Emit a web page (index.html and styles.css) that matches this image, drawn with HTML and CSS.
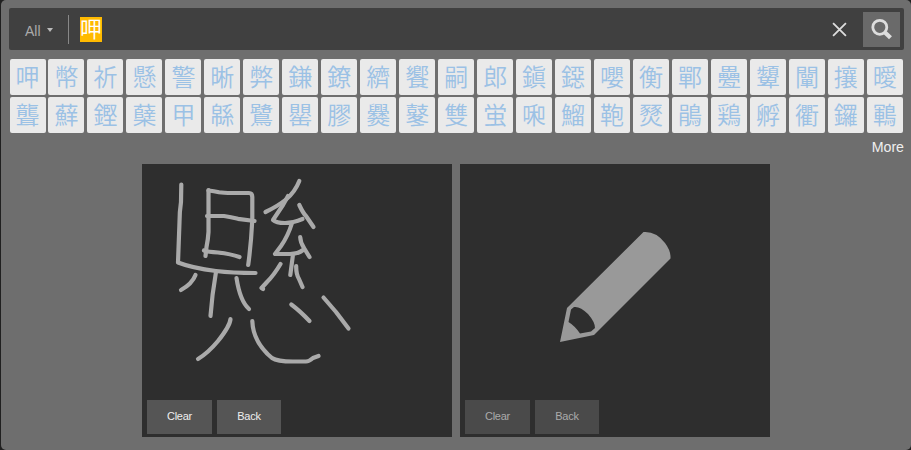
FILE: index.html
```
<!DOCTYPE html>
<html lang="ja">
<head>
<meta charset="utf-8">
<title>Handwriting search</title>
<link rel="stylesheet" href="styles.css">
</head>
<body>
<main class="app">
  <form class="search">
    <div class="filter">All<span class="caret"></span></div>
    <div class="query"><span class="selected">呷</span></div>
    <svg class="close" viewBox="0 0 14 14"><path d="M1 1L13 13M13 1L1 13"/></svg>
    <div class="submit"><svg viewBox="0 0 22 22"><circle cx="8.8" cy="9.300" r="7"/><path d="M14 14.500L19.5 19.8"/></svg></div>
  </form>
  <div class="results">
    <b>呷</b><b>幣</b><b>祈</b><b>懸</b><b>警</b><b>晰</b><b>弊</b><b>鎌</b><b>鐐</b><b>纃</b><b>饗</b><b>嗣</b><b>郎</b><b>鎭</b><b>鐚</b><b>嚶</b><b>衡</b><b>鄲</b><b>疉</b><b>顰</b><b>闡</b><b>攘</b><b>曖</b>
    <b>聾</b><b>蘚</b><b>鏗</b><b>蘖</b><b>甲</b><b>緜</b><b>鷺</b><b>罌</b><b>膠</b><b>爨</b><b>鼕</b><b>雙</b><b>蛍</b><b>啝</b><b>鰡</b><b>鞄</b><b>燹</b><b>鵑</b><b>鶏</b><b>孵</b><b>衢</b><b>鑼</b><b>鶤</b>
  </div>
  <div class="more">More</div>
  <div class="boards">
    <section class="board">
      <svg class="ink" viewBox="142 164 310 231">
        <path d="M181.300 184.500L181 202Q179.500 212 179.500 222L178 262.500Q192 268 216 271Q232 273 255.500 273"/>
        <path d="M208.500 190L208.500 232Q208 240 206.500 247L205.500 256"/>
        <path d="M208.500 190.500Q214 191 219 192.300Q223 193 232 193H249Q252.300 193 252.300 197V220Q251 245 248.200 265"/>
        <path d="M207 216H224Q231 217 238 218.800L254.500 221M204 250.500Q208 252 218 252.500Q231 254 239.500 257"/>
        <path d="M195.500 275Q192 284 181 290M216 272Q212 295 210.500 316M236.500 278Q240 301 249 309"/>
        <path d="M299.300 181Q295 192 286 199.500Q278 206 265.500 212"/>
        <path d="M288 196L283 205L273 220Q276 223 285 223Q293 223 302.500 219"/>
        <path d="M299.300 205Q303 213 306 216L313.500 227"/>
        <path d="M292 223Q288 236 281 246L275 254H290Q298 254 303 250"/>
        <path d="M300.200 237Q300.500 243 304 248L309.500 257M280.500 264Q274 275 267 282L261.500 288L263 289M292.800 256L290.300 275M296.200 266Q296 274 299 279L302.500 287"/>
        <path d="M230.500 319Q230 326 218 341Q208 353 198 359"/>
        <path d="M252.300 321Q253 342 272 358Q277 361.500 293 361.500H306Q309 361.500 313 358L318.500 356"/>
        <path d="M291.300 304.500Q300 311 309.500 321M323.500 297.500L336 312L348.500 328.500"/>
      </svg>
      <div class="actions"><button class="clear">Clear</button><button>Back</button></div>
    </section>
    <section class="board idle">
      <svg class="ink" viewBox="460 164 310 231">
        <path class="pencil" fill-rule="evenodd" d="M560 342L567 308L643.500 232Q656 231 665 243Q671 251 670.500 258.500L594 335ZM571 309.500L568.500 322Q575 326 580 333.500L591 331.500L595 328Q595 322 588 314Q580 306 574 307Z"/>
      </svg>
      <div class="actions"><button class="clear">Clear</button><button>Back</button></div>
    </section>
  </div>
</main>
</body>
</html>
```
FILE: styles.css
```
* { box-sizing: border-box; }
body { margin: 0; background: #202020; font-family: "Liberation Sans", "Noto Sans CJK JP", sans-serif; }
.app { height: 450px; margin-left: 1px; padding: 8px 7px 0 8px; background: #6e6e6e; border-radius: 5px; }
.search { display: flex; align-items: center; height: 42px; padding: 4px; background: #404040; border-radius: 2px; }
.filter { display: flex; align-items: center; width: 56px; height: 29px; padding: 3px 0 0 12px; border-right: 1px solid #888; color: #aaa; font-size: 14px; }
.caret { margin: -1px 0 0 6px; border: 3px solid transparent; border-top: 4px solid #bbb; border-bottom: 0; }
.query { flex: 1; padding-left: 11px; }
.selected { display: block; width: 22px; height: 25px; background: #ffba00; color: #fff; font: 350 22px/20px "Noto Sans CJK JP", sans-serif; }
.close { width: 15px; height: 15px; margin: 1px 16px 0 0; fill: none; stroke: #ddd; stroke-width: 1.7; }
.submit { display: flex; align-items: center; justify-content: center; width: 37px; height: 35px; background: #6a6a6a; }
.submit svg { width: 22px; height: 22px; fill: none; stroke: #ddd; stroke-width: 2.8; }
.submit path { stroke-width: 4.2; }
.results { display: grid; grid-template-columns: repeat(23, 36px); justify-content: space-between; row-gap: 2px; margin: 9px 1.200px 0 .5px; }
.results b { height: 36px; background: #eaeaea; border-radius: 2px; color: #9bc1e5; font: 350 24px/34px "Noto Sans CJK JP", sans-serif; text-align: center; }
.more { height: 31px; padding-top: 6px; color: #eee; font-size: 14.200px; line-height: 16px; text-align: right; }
.boards { display: flex; justify-content: center; gap: 8px; padding-right: 1px; }
.board { width: 310px; height: 273px; background: #2e2e2e; }
.ink { display: block; width: 310px; height: 231px; fill: none; stroke: #aaa; stroke-width: 4.200; stroke-linecap: round; stroke-linejoin: round; }
.pencil { fill: #999; stroke: none; }
.actions { display: flex; gap: 5px; padding: 5px 5px 0; }
button { width: 64px; height: 34px; padding: 0 0 2px; border: 0; background: #555; color: #eee; font: 11px "Liberation Sans", sans-serif; letter-spacing: -.25px; }
.clear { width: 65px; }
.idle button { background: #4a4a4a; color: #aaa; }
```
